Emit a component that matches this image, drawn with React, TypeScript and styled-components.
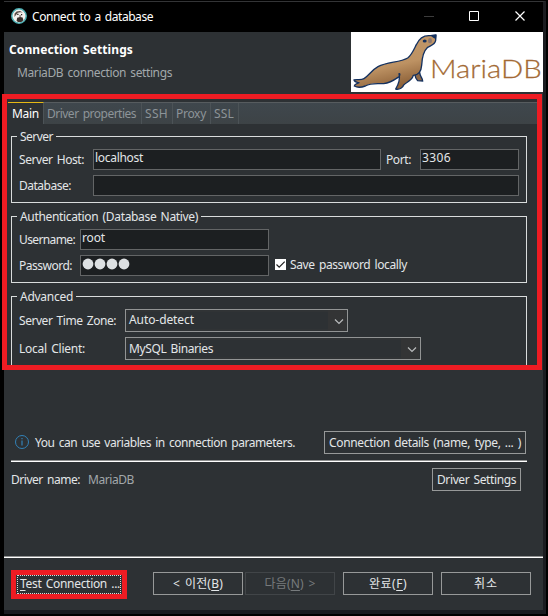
import React, { ReactNode, useLayoutEffect, useRef, useState } from "react";
import styled, { createGlobalStyle, css } from "styled-components";

const c = {
  panel: "#2d3134",
  field: "#1c1f21",
  text: "#e3e6e8",
  muted: "#a2a8ab",
  line: "#d9dcdc",
  red: "#ee1c23",
};

const Global = createGlobalStyle`
  * { box-sizing: border-box; }
  body { margin: 0; background: #000; }
`;

const Screen = styled.div`
  position: relative;
  width: 548px;
  height: 616px;
  padding: 1px 0 0 4px;
  background: #000;
  color: ${c.text};
  font: 12px/16px "Noto Sans", "Noto Sans CJK KR", sans-serif;
  overflow: hidden;
`;

const Window = styled.div`
  width: 542px;
  height: 613px;
  border-top: 1px solid #333436;
  border-right: 3px solid #1b1c20;
  border-bottom: 4px solid #1a1b20;
  background: ${c.panel};
  display: flex;
  flex-direction: column;
`;

/* ---------- text ---------- */

const TextBox = styled.span<{ $mt?: number; $color?: string; $bold?: boolean }>`
  display: block;
  flex: none;
  height: 16px;
  margin-top: ${(p) => p.$mt ?? 0}px;
  color: ${(p) => p.$color ?? "inherit"};
  font-weight: ${(p) => (p.$bold ? 700 : 400)};
  white-space: pre;
`;

const Tracked = styled.span`
  display: inline-block;
  line-height: 18px;
  word-spacing: 1.5px;
  u { text-underline-offset: 2px; }
`;

type TextProps = {
  w: number;
  children: ReactNode;
  mt?: number;
  color?: string;
  bold?: boolean;
};

/** Text whose tracking is adjusted so that the run is `w` pixels wide. */
function Text({ w, children, mt, color, bold }: TextProps) {
  const ref = useRef<HTMLSpanElement>(null);
  const [spacing, setSpacing] = useState(0);
  useLayoutEffect(() => {
    const el = ref.current;
    if (!el) return;
    const n = (el.textContent ?? "").length;
    setSpacing((w - el.getBoundingClientRect().width) / Math.max(n, 1));
  }, [w]);
  return (
    <TextBox $mt={mt} $color={color} $bold={bold} style={{ width: w }}>
      <Tracked ref={ref} style={{ letterSpacing: spacing }}>
        {children}
      </Tracked>
    </TextBox>
  );
}

/* ---------- title and header ---------- */

const TitleBar = styled.header`
  flex: none;
  height: 30px;
  background: #000;
  color: #fff;
  display: flex;
  padding: 6px 17px 0 7px;
  gap: 5px;
`;

const WindowControls = styled.svg`
  margin-left: auto;
  margin-top: 2px;
`;

const Banner = styled.section`
  flex: none;
  height: 62px;
  display: flex;
  justify-content: space-between;
`;

const BannerCopy = styled.div`
  padding: 9px 0 0 5px;
  display: flex;
  flex-direction: column;
  & > :last-child { margin-left: 8px; }
`;

const Logo = styled.svg`
  width: 192px;
  height: 60px;
  background: #fff;
`;

/* ---------- tabs ---------- */

const TabBar = styled.nav`
  flex: none;
  margin: 8px 6px 0 4px;
  height: 22px;
  display: flex;
  border-top: 1px solid #575c5f;
  background: linear-gradient(#3f474d, #3d4346);
`;

const Tab = styled.div<{ $w: number; $active?: boolean }>`
  width: ${(p) => p.$w}px;
  padding: 2px 0 0 3px;
  border-right: 1px solid #4c5357;
  color: #8d9498;
  ${(p) =>
    p.$active &&
    css`
      margin-top: -1px;
      padding: 2px 0 0 4px;
      border-top: 1px solid #e5b814;
      background: ${c.panel};
      color: #fff;
    `}
`;

/* ---------- form ---------- */

const Form = styled.main`
  flex: none;
  height: 241px;
  overflow: hidden;
  padding: 12px 16px 0 7px;
`;

const Group = styled.section<{ $h: number }>`
  height: ${(p) => p.$h}px;
  margin-bottom: 13px;
  border: 1px solid ${c.line};
  padding: 0 7px;
`;

const Legend = styled.h2`
  width: max-content;
  margin: -9px 0 5px -2px;
  padding: 0 3px;
  background: ${c.panel};
  font-size: 12px;
  font-weight: 400;
`;

const Row = styled.div`
  display: flex;
  align-items: flex-start;
  margin-bottom: 5px;
`;

const LabelCell = styled.div<{ $w: number; $indent?: number }>`
  flex: none;
  width: ${(p) => p.$w}px;
  padding-left: ${(p) => p.$indent ?? 0}px;
`;

const Field = styled.div<{ $w: number }>`
  flex: none;
  width: ${(p) => p.$w}px;
  height: 21px;
  border: 1px solid #636566;
  background: ${c.field};
  padding-left: 1px;
`;

const PasswordDots = styled.svg`
  display: block;
`;

const Select = styled.div<{ $w: number }>`
  flex: none;
  width: ${(p) => p.$w}px;
  height: 23px;
  border: 1px solid #929494;
  box-shadow: inset 0 0 0 2px #303335;
  padding: 0 1px 0 3px;
  display: flex;
  justify-content: space-between;
`;

const Arrow = styled.div`
  width: 18px;
  height: 21px;
  padding: 1px 0 0 4px;
  background: #333435;
  display: grid;
  place-items: center;
`;

const Check = styled.svg`
  flex: none;
  margin: 4px 4px 0 6px;
  background: #fff;
`;

/* ---------- lower area ---------- */

const InfoRow = styled.div`
  flex: none;
  display: flex;
  margin: 66px 17px 0 11px;
  height: 23px;
`;

const InfoIcon = styled.svg`
  flex: none;
  margin: 3px 5px 0 -1px;
`;

const Rule = styled.div<{ $inset?: boolean }>`
  flex: none;
  height: 2px;
  border-top: 1px solid #8f9191;
  background: #fff;
  margin: ${(p) => (p.$inset ? "6px 16px 0 7px" : "65px 0 0")};
`;

const DriverRow = styled.div`
  flex: none;
  display: flex;
  gap: 8px;
  margin: 6px 22px 0 7px;
  height: 23px;
`;

const Button = styled.div<{ $w: number; $disabled?: boolean; $end?: boolean }>`
  flex: none;
  width: ${(p) => p.$w}px;
  height: 23px;
  margin-left: ${(p) => (p.$end ? "auto" : 0)};
  border: 1px solid ${(p) => (p.$disabled ? "#414548" : "#979999")};
  color: ${(p) => (p.$disabled ? "#777b7d" : c.text)};
  display: flex;
  justify-content: center;
  padding-top: 2px;
`;

const Footer = styled.footer`
  flex: none;
  display: flex;
  align-items: flex-start;
  padding: 12px 12px 0 7px;
`;

const TestButton = styled.div`
  width: 116px;
  height: 29px;
  border: 5px solid ${c.red};
  margin-right: 26px;
`;

const FocusRing = styled.div`
  height: 19px;
  margin: 0 1px;
  border: 1px dotted #d8dadb;
  padding-left: 2px;
`;

const FooterButtons = styled.div`
  display: flex;
  padding-top: 2px;
  & > :nth-child(2) { margin: 0 8px 0 2px; }
  & > :nth-child(3) { margin-right: 8px; }
`;

const Highlight = styled.div`
  position: absolute;
  left: 2px;
  top: 94px;
  width: 540px;
  height: 276px;
  border: 5px solid ${c.red};
  pointer-events: none;
`;

/* ---------- drawings ---------- */

function BeaverIcon() {
  return (
    <svg width="16" height="16" viewBox="0 0 16 16">
      <circle cx="8" cy="8" r="7.2" fill="#f4f1ee" stroke="#4fb0b5" strokeWidth="1.5" />
      <path d="M3.6 5.6 5.6 3.400 9 3l2.800 1.600-2.400-.4-2.600.6-1.600 2L3.400 9z" fill="#5a4c45" />
      <path d="M6.200 9.800 9 9l2.600.6.8 2.600-2 1.800H7.200l-1.600-1z" fill="#3a2e2a" />
      <path d="M6.200 5.800h1.300v1.300H6.200zM10 6h1.200v1.200H10zM8.300 7.600h1.600v1H8.300z" fill="#2a2422" />
    </svg>
  );
}

function MariaLogo() {
  return (
    <Logo viewBox="231 96 576 180">
      <defs>
        <linearGradient id="fur" x1="0" y1="0" x2="0.35" y2="1">
          <stop offset="0" stopColor="#c39a6b" />
          <stop offset="0.65" stopColor="#bd9263" />
          <stop offset="1" stopColor="#8e6239" />
        </linearGradient>
      </defs>
      <path
        d="M421 214 C424 226 421 233 431 242 L446 243 C447 236 438 230 437 218 L433 204Z"
        fill="#8e6846"
        stroke="#14315f"
        strokeWidth="4"
      />
      <path
        d="M486 105 C478 104 472 108 464 107 C447 107 434 119 427 134 C418 152 413 165 401 174 C377 188 340 185 312 200 C292 211 285 227 270 236 C260 242 249 237 240 240 C242 247 249 247 255 248 C249 252 242 251 241 258 C251 264 263 262 274 258 C291 248 308 251 329 251 C345 249 358 242 371 233 C381 227 377 219 375 221 C380 240 373 254 365 267 C377 270 387 262 389 255 C397 247 412 241 416 231 L418 226 C436 225 442 212 443 196 C444 172 447 155 461 142 C471 136 483 134 485 121 Z"
        fill="url(#fur)"
        stroke="#14315f"
        strokeWidth="4"
        strokeLinejoin="round"
      />
      <path d="M470 107 L487 104 L486 118 L478 113Z" fill="#14315f" />
      <ellipse cx="452" cy="123" rx="6" ry="4.5" fill="#14315f" />
      <ellipse cx="468" cy="122" rx="6" ry="8" fill="#8b7770" />
      <text
        x="468"
        y="234"
        fontFamily="Lato, sans-serif"
        fontWeight="300"
        fontSize="79"
        fill="#a36a35"
        stroke="#a36a35"
        strokeWidth="0.8"
        textLength="335"
        lengthAdjust="spacingAndGlyphs"
      >
        MariaDB
      </text>
    </Logo>
  );
}

function DropArrow() {
  return (
    <Arrow>
      <svg width="10" height="7" viewBox="0 0 10 7">
        <path d="M1 1.5 5 5.5 9 1.5" fill="none" stroke="#b9bbbc" strokeWidth="1.2" />
      </svg>
    </Arrow>
  );
}

export default function App() {
  return (
    <Screen>
      <Global />
      <Window>
        <TitleBar>
          <BeaverIcon />
          <Text w={121} color="#fff">Connect to a database</Text>
          <WindowControls width="102" height="12" viewBox="0 0 102 12" fill="none">
            <path d="M0 6.5h10" stroke="#3c3c3c" />
            <path d="M45.5 1.5h9v9h-9z" stroke="#fff" />
            <path d="M91.5 1.5l9 9M100.5 1.5l-9 9" stroke="#fff" strokeWidth="1.2" />
          </WindowControls>
        </TitleBar>

        <Banner>
          <BannerCopy>
            <Text w={124} bold color="#fff">Connection Settings</Text>
            <Text w={155} mt={7} color={c.muted}>MariaDB connection settings</Text>
          </BannerCopy>
          <MariaLogo />
        </Banner>

        <TabBar>
          <Tab $w={36} $active><Text w={27}>Main</Text></Tab>
          <Tab $w={98}><Text w={89}>Driver properties</Text></Tab>
          <Tab $w={31}><Text w={23}>SSH</Text></Tab>
          <Tab $w={38}><Text w={30}>Proxy</Text></Tab>
          <Tab $w={28}><Text w={20}>SSL</Text></Tab>
        </TabBar>

        <Form>
          <Group $h={67}>
            <Legend><Text w={33}>Server</Text></Legend>
            <Row>
              <LabelCell $w={74}><Text w={65} mt={2}>Server Host:</Text></LabelCell>
              <Field $w={288}><Text w={48} mt={-1}>localhost</Text></Field>
              <LabelCell $w={39} $indent={5}><Text w={25} mt={2}>Port:</Text></LabelCell>
              <Field $w={99}><Text w={29} mt={-1}>3306</Text></Field>
            </Row>
            <Row>
              <LabelCell $w={74}><Text w={52} mt={2}>Database:</Text></LabelCell>
              <Field $w={426} />
            </Row>
          </Group>

          <Group $h={67}>
            <Legend><Text w={178}>Authentication (Database Native)</Text></Legend>
            <Row>
              <LabelCell $w={61}><Text w={56} mt={2}>Username:</Text></LabelCell>
              <Field $w={189}><Text w={23} mt={-1}>root</Text></Field>
            </Row>
            <Row>
              <LabelCell $w={61}><Text w={53} mt={2}>Password:</Text></LabelCell>
              <Field $w={189}>
                <PasswordDots width="50" height="18" fill="#dde0e2">
                  {[6, 18, 30, 42].map((x) => (
                    <circle key={x} cx={x} cy="8" r="5.4" />
                  ))}
                </PasswordDots>
              </Field>
              <Check width="11" height="11" viewBox="0 0 11 11">
                <path d="M1.5 5.5 4.2 8.2 9.7 2.7" fill="none" stroke="#222" strokeWidth="1.2" />
              </Check>
              <Text w={117} mt={1}>Save password locally</Text>
            </Row>
          </Group>

          <Group $h={90}>
            <Legend><Text w={53}>Advanced</Text></Legend>
            <Row>
              <LabelCell $w={106}><Text w={97} mt={3}>Server Time Zone:</Text></LabelCell>
              <Select $w={223}><Text w={65} mt={1}>Auto-detect</Text><DropArrow /></Select>
            </Row>
            <Row>
              <LabelCell $w={106}><Text w={66} mt={3}>Local Client:</Text></LabelCell>
              <Select $w={296}><Text w={84} mt={2}>MySQL Binaries</Text><DropArrow /></Select>
            </Row>
          </Group>
        </Form>

        <InfoRow>
          <InfoIcon width="16" height="16" viewBox="0 0 16 16" fill="none" stroke="#3282b8">
            <circle cx="8" cy="8" r="6.5" />
            <path d="M8 6.5v5M8 4v1.3" strokeWidth="1.2" />
          </InfoIcon>
          <Text w={260} mt={3}>You can use variables in connection parameters.</Text>
          <Button $w={202} $end><Text w={192}>Connection details (name, type, ... )</Text></Button>
        </InfoRow>
        <Rule $inset />
        <DriverRow>
          <Text w={69} mt={3}>Driver name:</Text>
          <Text w={46} mt={3} color={c.muted}>MariaDB</Text>
          <Button $w={89} $end><Text w={79}>Driver Settings</Text></Button>
        </DriverRow>
        <Rule />
        <Footer>
          <TestButton>
            <FocusRing><Text w={100} mt={-1}><u>T</u>est Connection ...</Text></FocusRing>
          </TestButton>
          <FooterButtons>
            <Button $w={90}><Text w={50}>&lt; 이전(<u>B</u>)</Text></Button>
            <Button $w={90} $disabled><Text w={51}>다음(<u>N</u>) &gt;</Text></Button>
            <Button $w={90}><Text w={38}>완료(<u>F</u>)</Text></Button>
            <Button $w={90}><Text w={24}>취소</Text></Button>
          </FooterButtons>
        </Footer>
      </Window>
      <Highlight />
    </Screen>
  );
}
